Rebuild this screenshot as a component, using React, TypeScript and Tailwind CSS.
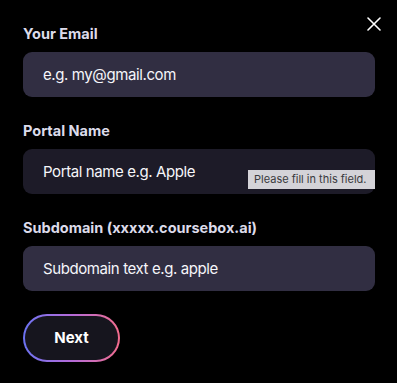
import React from 'react';

const Field: React.FC<{ label: string; placeholder: string; dark?: boolean; tooltip?: string }> = ({
    label,
    placeholder,
    dark,
    tooltip,
}) => {
    return (
        <div className="flex flex-col">
            <label className="text-[14.5px] font-bold text-[#dcdbea] leading-[20px] mb-[8px]">{label}</label>
            <div className="relative">
                <input
                    placeholder={placeholder}
                    className={`w-full h-[45px] rounded-[9px] pl-[20px] text-[15px] tracking-[-0.4px] text-white placeholder:text-[#f6f6fa] outline-none ${
                        dark ? 'bg-[#1d1b28]' : 'bg-[#312e42]'
                    }`}
                />
                {tooltip && (
                    <div className="absolute right-0 top-[21px] h-[19px] w-[127px] bg-[#d4d3d8] text-[#3a3a3e] text-[11px] leading-[19px] pl-[6px]">
                        {tooltip}
                    </div>
                )}
            </div>
        </div>
    );
};

export default function App() {
    return (
        <div
            className="relative w-[397px] h-[383px] bg-black overflow-hidden"
            style={{ fontFamily: 'Inter, "Liberation Sans", sans-serif' }}
        >
            <button className="absolute right-[16px] top-[17px] w-[14px] h-[14px] text-white">
                <svg viewBox="0 0 14 14" className="w-[14px] h-[14px]" fill="none" stroke="currentColor" strokeWidth={1.6} strokeLinecap="round">
                    <path d="M1 1L13 13M13 1L1 13" />
                </svg>
            </button>
            <div className="flex flex-col gap-[24px] pl-[23px] pr-[22px] pt-[24px]">
                <Field label="Your Email" placeholder="e.g. my@gmail.com" />
                <Field label="Portal Name" placeholder="Portal name e.g. Apple" dark tooltip="Please fill in this field." />
                <Field label="Subdomain (xxxxx.coursebox.ai)" placeholder="Subdomain text e.g. apple" />
                <div className="-mt-[1px]">
                    <div className="w-[97px] h-[48px] rounded-full p-[2px] bg-gradient-to-r from-[#6a72f2] via-[#b46ad8] to-[#f26b8c]">
                        <button className="w-full h-full rounded-full bg-[#16151e] text-white text-[15px] font-bold">
                            Next
                        </button>
                    </div>
                </div>
            </div>
        </div>
    );
}
